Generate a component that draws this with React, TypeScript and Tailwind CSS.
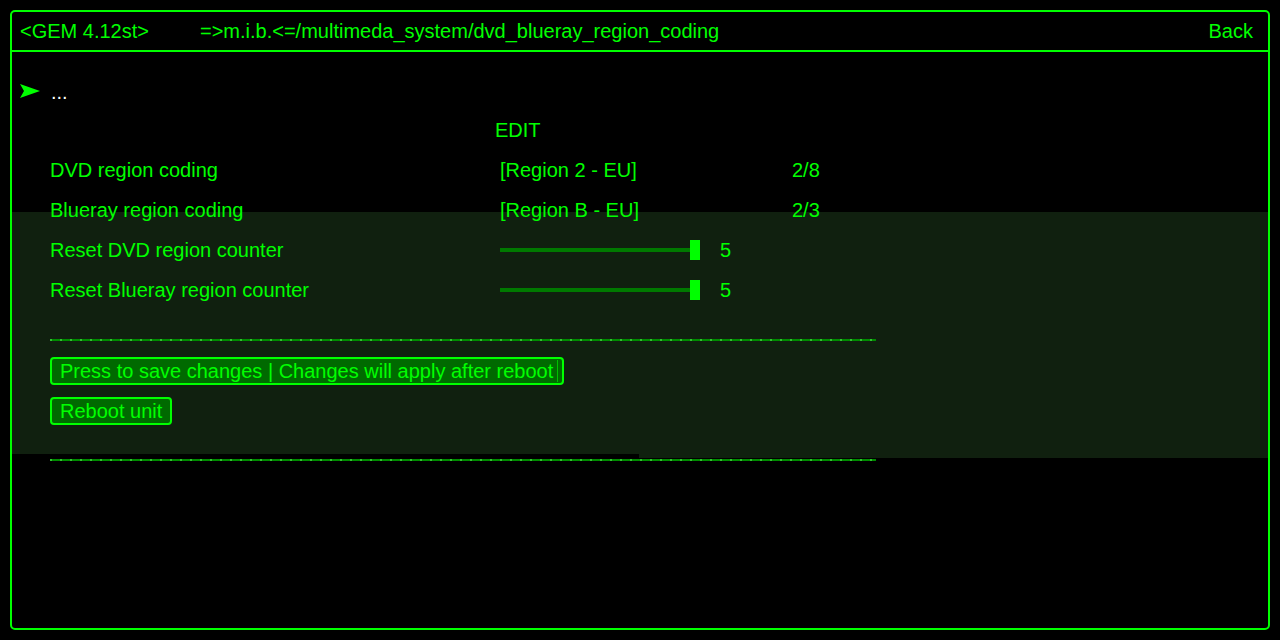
import React from "react";

const G = "text-[#00ff00]";

function Slider({ value }: { value: number }) {
  return (
    <div className="flex items-center">
      <div className="w-[190px] h-[4px] bg-[#007a00]" />
      <div className="w-[10px] h-[20px] bg-[#00ff00]" />
      <span className={`ml-[20px] ${G}`}>{value}</span>
    </div>
  );
}

function Row({ label, children }: { label: string; children: React.ReactNode }) {
  return (
    <div className="h-[40px] flex items-center pl-[38px]">
      <div className={`w-[450px] ${G}`}>{label}</div>
      {children}
    </div>
  );
}

const dashed =
  "ml-[38px] w-[826px] h-[2px] bg-[repeating-linear-gradient(90deg,#30c030_0px,#30c030_2px,#008c00_2px,#008c00_10px)]";

export default function App() {
  return (
    <div
      className="w-[1280px] h-[640px] bg-black p-[10px] text-[20px] leading-[24px]"
      style={{ fontFamily: '"Liberation Sans", Arial, sans-serif' }}
    >
      <div className="h-full border-2 border-[#00ff00] rounded-[5px] flex flex-col">
        <div className="h-[40px] border-b-2 border-[#00ff00] flex items-center pl-[8px] pr-[15px]">
          <span className={`w-[180px] ${G}`}>&lt;GEM 4.12st&gt;</span>
          <span className={G}>=&gt;m.i.b.&lt;=/multimeda_system/dvd_blueray_region_coding</span>
          <span className={`ml-auto ${G}`}>Back</span>
        </div>
        <div className="relative flex-1 pt-[20px]">
          <div className="absolute left-0 right-0 top-[160px] h-[246px] bg-[#10200f]" />
          <div className="absolute left-0 w-[627px] top-[402px] h-[4px] bg-black" />
          <div className="relative flex flex-col">
            <div className="h-[40px] flex items-center pl-[8px]">
              <svg width="20" height="14" viewBox="0 0 20 14" className="mr-[11px] -mt-[2px]">
                <polygon points="0,0 20,7 0,14 4,7" fill="#00ff00" />
              </svg>
              <span className="text-white">...</span>
            </div>
            <div className="h-[38px] flex items-center pl-[483px] -mt-[1px] mb-[1px]">
              <span className={G}>EDIT</span>
            </div>
            <Row label="DVD region coding">
              <span className={`w-[292px] ${G}`}>[Region 2 - EU]</span>
              <span className={G}>2/8</span>
            </Row>
            <Row label="Blueray region coding">
              <span className={`w-[292px] ${G}`}>[Region B - EU]</span>
              <span className={G}>2/3</span>
            </Row>
            <Row label="Reset DVD region counter">
              <Slider value={5} />
            </Row>
            <Row label="Reset Blueray region counter">
              <Slider value={5} />
            </Row>
            <div className={`${dashed} mt-[29px]`} />
            <div className="ml-[38px] mt-[16px] w-[514px] h-[28px] border-2 border-[#00ff00] rounded-[4px] bg-[#006a00] flex items-center pl-[8px] pr-[4px]">
              <span className={`${G} whitespace-nowrap`}>Press to save changes | Changes will apply after reboot</span>
              <div className="ml-auto w-[1px] h-[22px] bg-[#00c000]" />
            </div>
            <div className="ml-[38px] mt-[12px] w-[122px] h-[28px] border-2 border-[#00ff00] rounded-[4px] bg-[#006a00] flex items-center pl-[8px]">
              <span className={`${G} whitespace-nowrap`}>Reboot unit</span>
            </div>
            <div className={`${dashed} mt-[34px]`} />
          </div>
        </div>
      </div>
    </div>
  );
}
